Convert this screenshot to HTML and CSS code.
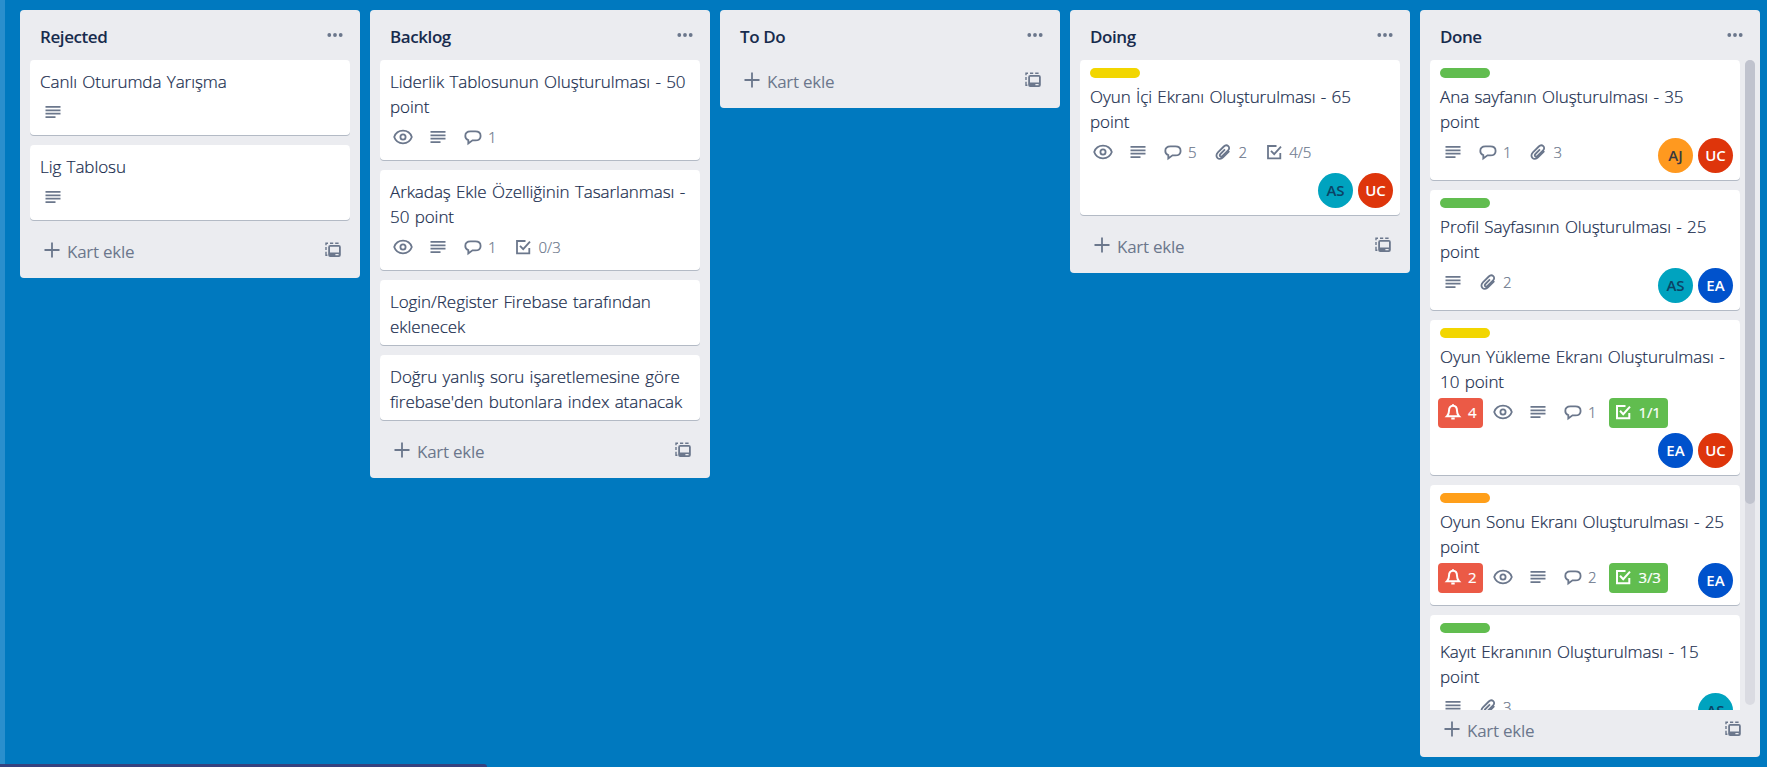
FILE: index.html
```html
<!DOCTYPE html>
<html lang="tr">
<head>
<meta charset="utf-8">
<title>Board</title>
<link rel="stylesheet" href="styles.css">
</head>
<body>
<svg class="defs" aria-hidden="true">
  <symbol id="eye" viewBox="0 0 20 20"><path d="M1.200 10C2.600 5.900 6 3.700 10 3.700s7.400 2.200 8.800 6.300c-1.400 4.100-4.800 6.300-8.800 6.300S2.600 14.100 1.200 10Z"/><circle cx="10" cy="10" r="2.600"/></symbol>
  <symbol id="desc" viewBox="0 0 20 20"><path d="M2.500 4.800h15M2.500 8.300h15M2.500 11.700h15M2.500 15.100h10"/></symbol>
  <symbol id="comment" viewBox="0 0 20 20"><path d="M5.300 16.500v-3.400C3.100 12.300 2.300 10.700 2.300 9c0-3 1.900-4.600 5.200-4.600h4.800c3.300 0 5.300 1.700 5.300 4.500s-2 4.500-5.300 4.500H9.500Z"/></symbol>
  <symbol id="clip" viewBox="0 0 20 20"><path d="M16.300 9.200 10 15.400c-1.900 1.900-4.300 1.800-5.600.5-1.400-1.400-1.300-3.700.5-5.500l5.900-5.900c1.300-1.300 3.300-1.400 4.500-.3s1.100 2.900-.2 4.200L9.500 14c-.8.800-1.800.8-2.400.3-.6-.6-.5-1.500.3-2.300l4.600-4.600"/></symbol>
  <symbol id="check" viewBox="0 0 20 20"><path d="M12.500 4H4v12.300h12.300V11M7 8.800l3.200 3.400 6.800-7.600"/></symbol>
  <symbol id="bell" viewBox="0 0 20 20"><path d="M4 14.300c1.600-1.600 2-3 2-5.500C6 5.700 7.300 3.800 10 3.800S14 5.700 14 8.800c0 2.500.4 3.900 2 5.500Z"/><path d="M8.300 16.500h3.400M10 2.300v1.500"/></symbol>
  <symbol id="plus" viewBox="0 0 20 20"><path d="M10 2.500v15M2.500 10h15"/></symbol>
  <symbol id="dots" viewBox="0 0 20 20"><path class="solid" d="M2.400 10a1.900 1.900 0 1 0 3.800 0 1.900 1.900 0 1 0-3.800 0M8.100 10a1.900 1.900 0 1 0 3.800 0 1.900 1.900 0 1 0-3.800 0M13.800 10a1.900 1.900 0 1 0 3.800 0 1.900 1.900 0 1 0-3.800 0"/></symbol>
  <symbol id="template" viewBox="0 0 20 20"><path class="solid" fill-rule="evenodd" d="M7.200 5h8.600a2 2 0 0 1 2 2v8a2 2 0 0 1-2 2H7.200a2 2 0 0 1-2-2V7a2 2 0 0 1 2-2ZM7 6.800v5.700h9V6.800ZM12.400 14v1.300h3.200V14Z"/><path stroke-width="1.400" d="M3 5.200V3.200h2M7 3.200h3.200M12.200 3.200h3.400M3 7v3M3 11.800v3.400h1.400"/></symbol>
</svg>
<main class="board" id="board"></main>
<div class="status"></div>
<script src="board.js"></script>
</body>
</html>
```
FILE: styles.css
```css
* { box-sizing: border-box; }
body {
  margin: 0;
  height: 767px;
  overflow: hidden;
  background: #0079bf;
  color: #172b4d;
  font-family: "Open Sans", "Noto Sans", sans-serif;
  font-size: 17px;
  line-height: 25px;
}
.defs { display: none; }
.board {
  display: flex;
  align-items: flex-start;
  gap: 10px;
  height: 767px;
  padding: 10px 0 10px 15px;
  border-left: 5px solid #2a8fcd;
}
.list {
  display: flex;
  flex-direction: column;
  flex: none;
  width: 340px;
  max-height: 747px;
  border-radius: 4px;
  background: #ebecf0;
}
.list-head {
  display: flex;
  flex: none;
  justify-content: space-between;
  height: 50px;
  padding: 14px 15px 0 20px;
  font-weight: 600;
  letter-spacing: -0.42px;
}
.icon {
  flex: none;
  width: 20px;
  height: 20px;
  fill: none;
  stroke: #6b778c;
  stroke-width: 1.8;
}
.solid { fill: #6b778c; stroke: none; }
.list-head .icon { margin-top: 1px; }
.list-body { display: flex; min-height: 0; padding: 0 10px; }
.cards {
  display: flex;
  flex: 1;
  flex-direction: column;
  gap: 10px;
  min-width: 0;
  padding-bottom: 11px;
}
.empty .cards { padding-bottom: 1px; }
.scrolling .list-body { flex: 0 0 650px; padding-right: 5px; }
.scrolling .cards { overflow: hidden; padding: 0; }
.track {
  flex: none;
  width: 10px;
  height: 645px;
  margin-left: 5px;
  border-radius: 5px;
  background: #dadbe2;
}
.thumb { height: 444px; border-radius: 5px; background: #c0c3ce; }
.card {
  flex: none;
  padding: 9px 10px 0;
  border-radius: 4px;
  background: #fff;
  box-shadow: 0 1px 0 #b3bac5;
}
.card.plain { padding-bottom: 6px; }
.label { width: 50px; height: 10px; margin: -1px 0 6px; border-radius: 5px; }
.yellow { background: #f2d600; }
.green { background: #61bd4f; }
.orange { background: #ff9f1a; }
.title {
  font-weight: 300;
  -webkit-text-stroke: 0.2px;
  letter-spacing: -0.06px;
  word-spacing: 1px;
  white-space: nowrap;
}
.title span { display: block; }
.foot {
  display: flex;
  flex-wrap: wrap;
  justify-content: space-between;
  min-height: 41px;
  padding-top: 4px;
}
.badges { display: flex; gap: 5px; height: 30px; margin: 0 0 5px -2px; }
.badge {
  display: flex;
  align-items: center;
  height: 30px;
  padding: 0 5px;
  border-radius: 4px;
  color: #6b778c;
  font-size: 15px;
}
.badge .icon { margin: -2px 0.5px 0 -0.5px; }
.badge b {
  padding: 0 2px 0 5px;
  margin-top: -1px;
  font-weight: 300;
  -webkit-text-stroke: 0.2px;
}
.badge.red { width: 45px; background: #eb5a46; }
.badge.done { width: 59px; background: #61bd4f; }
.badge.red, .badge.done { color: #fff; }
.badge.red b, .badge.done b { font-weight: 400; letter-spacing: -0.2px; }
.red .icon, .done .icon { stroke: #fff; stroke-width: 2; }
.members { display: flex; gap: 5px; height: 42px; margin-left: auto; margin-right: -3px; }
.avatar {
  width: 35px;
  height: 35px;
  border-radius: 50%;
  color: #fff;
  font-size: 15px;
  font-weight: 600;
  line-height: 35px;
  text-align: center;
}
.AS { background: #00a3bf; color: #0b4264; }
.UC { background: #de350b; }
.AJ { background: #ff991f; color: #38393f; }
.EA { background: #0052cc; }
.add {
  display: flex;
  flex: none;
  height: 47px;
  padding: 8px 17px 0 22px;
  color: #6b778c;
  letter-spacing: -0.25px;
}
.add .icon { margin-top: 1px; }
.add .template { margin: 0.5px 0.5px 0 -0.5px; }
.add span { flex: 1; padding-left: 5px; }
.status {
  position: absolute;
  left: 0;
  bottom: 0;
  width: 487px;
  height: 3px;
  border-radius: 0 3px 0 0;
  background: #35427f;
}
```
FILE: board.js
```js
const lists = [
  { name: "Rejected", cards: [
    { title: ["Canlı Oturumda Yarışma"], badges: [["desc"]] },
    { title: ["Lig Tablosu"], badges: [["desc"]] } ] },
  { name: "Backlog", cards: [
    { title: ["Liderlik Tablosunun Oluşturulması - 50", "point"], badges: [["eye"], ["desc"], ["comment", "1"]] },
    { title: ["Arkadaş Ekle Özelliğinin Tasarlanması -", "50 point"], badges: [["eye"], ["desc"], ["comment", "1"], ["check", "0/3"]] },
    { title: ["Login/Register Firebase tarafından", "eklenecek"] },
    { title: ["Doğru yanlış soru işaretlemesine göre", "firebase'den butonlara index atanacak"] } ] },
  { name: "To Do", cards: [] },
  { name: "Doing", cards: [
    { label: "yellow", title: ["Oyun İçi Ekranı Oluşturulması - 65", "point"], badges: [["eye"], ["desc"], ["comment", "5"], ["clip", "2"], ["check", "4/5"]], members: ["AS", "UC"] } ] },
  { name: "Done", scrolling: true, cards: [
    { label: "green", title: ["Ana sayfanın Oluşturulması - 35", "point"], badges: [["desc"], ["comment", "1"], ["clip", "3"]], members: ["AJ", "UC"] },
    { label: "green", title: ["Profil Sayfasının Oluşturulması - 25", "point"], badges: [["desc"], ["clip", "2"]], members: ["AS", "EA"] },
    { label: "yellow", title: ["Oyun Yükleme Ekranı Oluşturulması -", "10 point"], badges: [["bell", "4", "red"], ["eye"], ["desc"], ["comment", "1"], ["check", "1/1", "done"]], members: ["EA", "UC"] },
    { label: "orange", title: ["Oyun Sonu Ekranı Oluşturulması - 25", "point"], badges: [["bell", "2", "red"], ["eye"], ["desc"], ["comment", "2"], ["check", "3/3", "done"]], members: ["EA"] },
    { label: "green", title: ["Kayıt Ekranının Oluşturulması - 15", "point"], badges: [["desc"], ["clip", "3"]], members: ["AS"] } ] }
];
const icon = id => `<svg class="icon ${id}"><use href="#${id}"/></svg>`;
const badge = ([id, text, tone = ""]) => `<div class="badge ${tone}">${icon(id)}${text ? `<b>${text}</b>` : ""}</div>`;
const card = c => `<article class="card ${c.badges ? "" : "plain"}">
  ${c.label ? `<div class="label ${c.label}"></div>` : ""}
  <div class="title">${c.title.map(t => `<span>${t}</span>`).join("")}</div>
  ${c.badges ? `<div class="foot"><div class="badges">${c.badges.map(badge).join("")}</div>
  ${c.members ? `<div class="members">${c.members.map(m => `<div class="avatar ${m}">${m}</div>`).join("")}</div>` : ""}</div>` : ""}
</article>`;
document.getElementById("board").innerHTML = lists.map(l => `<section class="list ${l.scrolling ? "scrolling" : ""} ${l.cards.length ? "" : "empty"}">
  <header class="list-head"><span>${l.name}</span>${icon("dots")}</header>
  <div class="list-body"><div class="cards">${l.cards.map(card).join("")}</div>
  ${l.scrolling ? `<div class="track"><div class="thumb"></div></div>` : ""}</div>
  <footer class="add">${icon("plus")}<span>Kart ekle</span>${icon("template")}</footer>
</section>`).join("");
```
